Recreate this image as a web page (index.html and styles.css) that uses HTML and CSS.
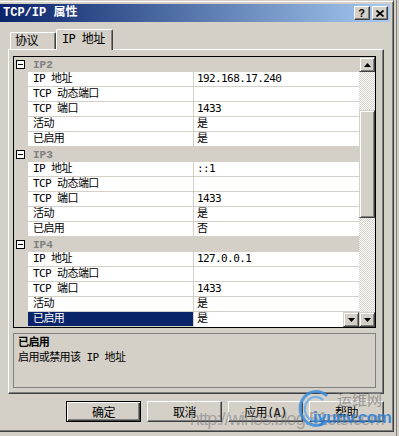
FILE: index.html
```html
<!DOCTYPE html>
<html>
<head>
<meta charset="utf-8">
<link rel="stylesheet" href="styles.css">
</head>
<body>
<div class="window">
  <div class="titlebar">
    <span class="title">TCP/IP 属性</span>
    <div class="cbtns">
      <span class="cbtn qm">?</span>
      <span class="cbtn"><svg width="8" height="7" viewBox="0 0 8 7"><path d="M0.5 0.5 L7.5 6.5 M7.5 0.5 L0.5 6.5" stroke="#000" stroke-width="1.7" fill="none"/></svg></span>
    </div>
  </div>
  <div class="body">
    <div class="tabs">
      <div class="tab t1">协议</div>
      <div class="tab active">IP 地址</div>
    </div>
    <div class="panel">
      <div class="grid">
        <div class="rows">
          <div class="cat"><span class="minus"></span><span class="cat-label">IP2</span></div>
          <div class="row"><span class="gut"></span><span class="name">IP 地址</span><span class="val">192.168.17.240</span></div>
          <div class="row"><span class="gut"></span><span class="name">TCP 动态端口</span><span class="val"></span></div>
          <div class="row"><span class="gut"></span><span class="name">TCP 端口</span><span class="val">1433</span></div>
          <div class="row"><span class="gut"></span><span class="name">活动</span><span class="val">是</span></div>
          <div class="row"><span class="gut"></span><span class="name">已启用</span><span class="val">是</span></div>
          <div class="cat"><span class="minus"></span><span class="cat-label">IP3</span></div>
          <div class="row"><span class="gut"></span><span class="name">IP 地址</span><span class="val">::1</span></div>
          <div class="row"><span class="gut"></span><span class="name">TCP 动态端口</span><span class="val"></span></div>
          <div class="row"><span class="gut"></span><span class="name">TCP 端口</span><span class="val">1433</span></div>
          <div class="row"><span class="gut"></span><span class="name">活动</span><span class="val">是</span></div>
          <div class="row"><span class="gut"></span><span class="name">已启用</span><span class="val">否</span></div>
          <div class="cat"><span class="minus"></span><span class="cat-label">IP4</span></div>
          <div class="row"><span class="gut"></span><span class="name">IP 地址</span><span class="val">127.0.0.1</span></div>
          <div class="row"><span class="gut"></span><span class="name">TCP 动态端口</span><span class="val"></span></div>
          <div class="row"><span class="gut"></span><span class="name">TCP 端口</span><span class="val">1433</span></div>
          <div class="row"><span class="gut"></span><span class="name">活动</span><span class="val">是</span></div>
          <div class="row sel"><span class="gut"></span><span class="name">已启用</span><span class="val"><span class="vtext">是</span><span class="b3d drop"><svg width="7" height="4" viewBox="0 0 7 4"><path d="M0 0 H7 L3.5 4 Z" fill="#000"/></svg></span></span></div>
        </div>
        <div class="vscroll">
          <span class="b3d sbtn"><svg width="7" height="4" viewBox="0 0 7 4"><path d="M0 4 H7 L3.5 0 Z" fill="#000"/></svg></span>
          <span class="track t-top"></span>
          <span class="b3d thumb"></span>
          <span class="track t-bot"></span>
          <span class="b3d sbtn"><svg width="7" height="4" viewBox="0 0 7 4"><path d="M0 0 H7 L3.5 4 Z" fill="#000"/></svg></span>
        </div>
      </div>
      <div class="desc">
        <div class="desc-title">已启用</div>
        <div class="desc-text">启用或禁用该 IP 地址</div>
      </div>
    </div>
    <div class="buttons">
      <span class="btn default">确定</span>
      <span class="btn">取消</span>
      <span class="btn">应用(A)</span>
      <span class="btn">帮助</span>
    </div>
  </div>
</div>
<div class="wm-url">http://winos.blog.51cto.com</div>
<div class="wm-logo">
  <svg class="swirl" width="34" height="40" viewBox="0 0 34 40"><path d="M30 8 A16 17 0 1 0 30 33" stroke="#3a8ee0" stroke-width="3" fill="none" opacity="0.85"/><path d="M26 12 A11 12 0 1 0 27 29" stroke="#5aa6ee" stroke-width="2" fill="none" opacity="0.8"/></svg>
  <span class="wm-cn">运维网</span>
  <span class="wm-en">iyunv.com</span>
</div>
</body>
</html>
```
FILE: styles.css
```css
html, body {
  margin: 0;
  padding: 0;
}
body {
  width: 399px;
  height: 436px;
  overflow: hidden;
  position: relative;
  background: linear-gradient(#808080, #808080) 396px 0 / 1px 100% no-repeat, #d4d0c8;
  font-family: "DejaVu Sans Mono", "Noto Sans CJK SC", monospace;
  color: #000;
}
.window {
  box-sizing: border-box;
  width: 394px;
  height: 432px;
  background: #d4d0c8;
  border-top: 1px solid #d4d0c8;
  border-right: 1px solid #404040;
  border-bottom: 1px solid #404040;
  box-shadow: inset 0 1px #fff, inset -1px -1px #808080;
  padding: 3px 3px 0 0;
  display: flex;
  flex-direction: column;
}
.titlebar {
  height: 18px;
  flex: none;
  background: linear-gradient(to right, #0a246a, #a6caf0);
  display: flex;
  align-items: center;
  justify-content: space-between;
  padding: 0 2px 0 3px;
}
.title {
  color: #fff;
  font: bold 12px "Liberation Mono", "Noto Sans CJK SC", monospace;
  line-height: 18px;
}
.cbtns {
  display: flex;
  gap: 2px;
}
.cbtn {
  box-sizing: border-box;
  width: 16px;
  height: 14px;
  background: #d4d0c8;
  border: 1px solid;
  border-color: #fff #404040 #404040 #fff;
  box-shadow: inset -1px -1px #808080;
  display: flex;
  align-items: center;
  justify-content: center;
}
.qm {
  font: bold 11px "Liberation Sans", sans-serif;
  line-height: 12px;
  padding-right: 1px;
}
.body {
  flex: 1;
  display: flex;
  flex-direction: column;
  padding: 7px 6px 0 8px;
}
.tabs {
  display: flex;
  align-items: flex-end;
  height: 20px;
  padding-left: 2px;
  position: relative;
  z-index: 1;
}
.tab {
  box-sizing: border-box;
  background: #d4d0c8;
  border-top: 1px solid #fff;
  border-left: 1px solid #fff;
  border-right: 1px solid #404040;
  box-shadow: inset -1px 0 #808080;
  border-radius: 2px 2px 0 0;
  font-size: 12px;
  letter-spacing: -0.6px;
  white-space: nowrap;
}
.t1 {
  width: 46px;
  height: 17px;
  padding-left: 4px;
  line-height: 16px;
}
.active {
  width: 57px;
  height: 21px;
  margin-bottom: -1px;
  padding-left: 5px;
  line-height: 19px;
}
.panel {
  box-sizing: border-box;
  width: 376px;
  height: 345px;
  border: 1px solid;
  border-color: #fff #404040 #404040 #fff;
  box-shadow: inset -1px -1px #808080;
  padding: 6px 0 0 4px;
}
.grid {
  box-sizing: border-box;
  width: 363px;
  height: 272px;
  border: 1px solid #000;
  display: flex;
  background: #fff;
}
.rows {
  width: 345px;
  overflow: hidden;
}
.cat {
  height: 15px;
  display: flex;
  align-items: center;
  background: #d4d0c8;
}
.minus {
  box-sizing: border-box;
  width: 9px;
  height: 9px;
  margin-left: 2px;
  border: 1px solid #000;
  background: #fff;
  position: relative;
}
.minus::after {
  content: "";
  position: absolute;
  left: 1px;
  top: 3px;
  width: 5px;
  height: 1px;
  background: #000;
}
.cat-label {
  margin-left: 8px;
  font: bold 11px "Liberation Mono", monospace;
  color: #808080;
  line-height: 14px;
}
.row {
  display: flex;
  height: 15px;
  font-size: 11px;
  letter-spacing: -0.6px;
  white-space: nowrap;
}
.gut {
  width: 14px;
  background: #d4d0c8;
  flex: none;
}
.name {
  box-sizing: border-box;
  width: 166px;
  flex: none;
  background: #fff;
  border-right: 1px solid #d4d0c8;
  border-bottom: 1px solid #d4d0c8;
  padding-left: 5px;
  line-height: 14px;
}
.val {
  box-sizing: border-box;
  width: 165px;
  flex: none;
  background: #fff;
  border-bottom: 1px solid #d4d0c8;
  padding-left: 3px;
  line-height: 14px;
  display: flex;
  justify-content: space-between;
}
.sel .name {
  background: #0a246a;
  color: #fff;
}
.sel .val {
  border-bottom: none;
}
.b3d {
  box-sizing: border-box;
  background: #d4d0c8;
  border: 1px solid;
  border-color: #d4d0c8 #404040 #404040 #d4d0c8;
  box-shadow: inset 1px 1px #fff, inset -1px -1px #808080;
  display: flex;
  align-items: center;
  justify-content: center;
}
.drop {
  width: 16px;
  height: 15px;
}
.vscroll {
  width: 16px;
  display: flex;
  flex-direction: column;
}
.sbtn {
  height: 15px;
  flex: none;
}
.track {
  flex: none;
  background-image: conic-gradient(#d4d0c8 25%, #fff 0 50%, #d4d0c8 0 75%, #fff 0);
  background-size: 2px 2px;
}
.t-top {
  height: 38px;
}
.thumb {
  height: 108px;
  flex: none;
}
.t-bot {
  height: 94px;
}
.desc {
  box-sizing: border-box;
  width: 363px;
  height: 55px;
  margin-top: 5px;
  border: 1px solid #808080;
  padding: 1px 4px;
  font-size: 11px;
  letter-spacing: -0.6px;
  line-height: 15px;
}
.desc-title {
  font-weight: bold;
}
.buttons {
  display: flex;
  justify-content: flex-end;
  gap: 6px;
  margin-top: 7px;
}
.btn {
  box-sizing: border-box;
  width: 75px;
  height: 21px;
  border: 1px solid;
  border-color: #fff #404040 #404040 #fff;
  box-shadow: inset -1px -1px #808080;
  font-size: 12px;
  letter-spacing: -0.6px;
  display: flex;
  align-items: center;
  justify-content: center;
}
.btn.default {
  border-color: #000;
  box-shadow: inset 1px 1px #fff, inset -1px -1px #404040, inset -2px -2px #808080;
}
.wm-url {
  position: absolute;
  left: 190px;
  top: 409px;
  font: 18px "Liberation Sans", sans-serif;
  letter-spacing: -0.9px;
  color: rgba(120, 120, 120, 0.55);
  white-space: nowrap;
}
.wm-logo {
  position: absolute;
  left: 295px;
  top: 388px;
  width: 104px;
  height: 44px;
}
.swirl {
  position: absolute;
  left: 2px;
  top: 0;
}
.wm-cn {
  position: absolute;
  left: 42px;
  top: 2px;
  font: 15px "Noto Sans CJK SC", sans-serif;
  line-height: 18px;
  color: rgba(130, 130, 130, 0.75);
}
.wm-en {
  position: absolute;
  left: 18px;
  top: 21px;
  font: bold 17px "Liberation Sans", sans-serif;
  letter-spacing: -0.5px;
  line-height: 18px;
  color: rgba(40, 125, 215, 0.85);
}
```
